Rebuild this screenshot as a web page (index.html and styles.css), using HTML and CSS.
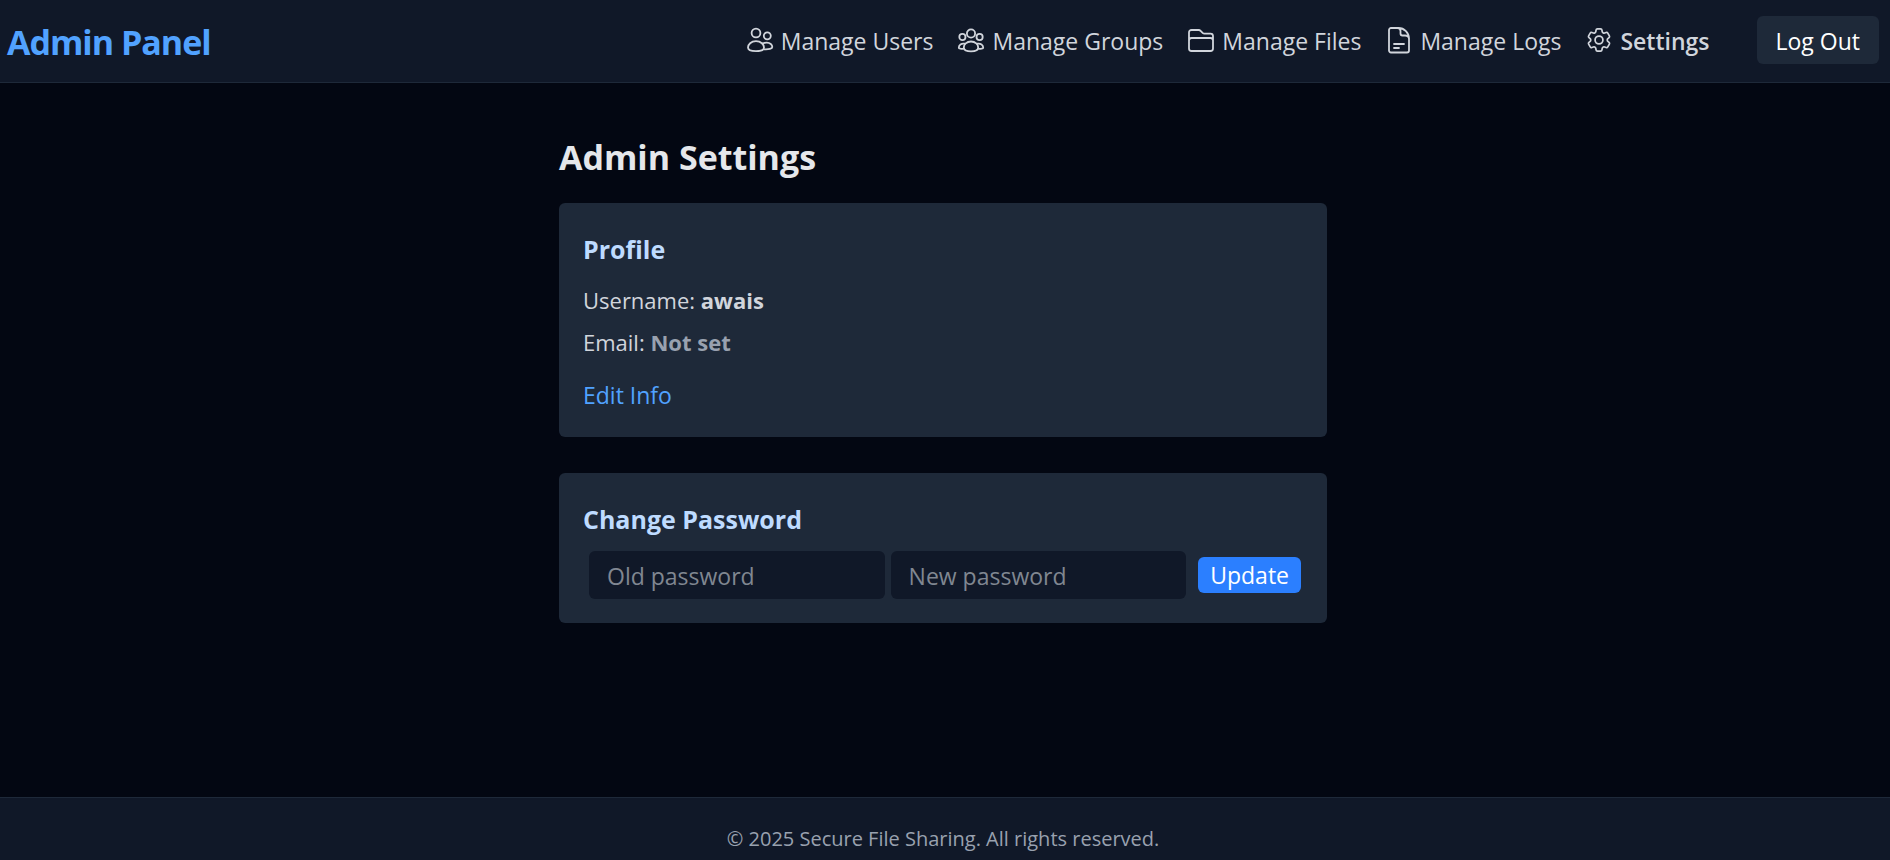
FILE: index.html
```html
<!DOCTYPE html>
<html lang="en">
<head>
<meta charset="utf-8">
<title>Admin Settings</title>
<link rel="stylesheet" href="styles.css">
</head>
<body>
<header class="topbar">
  <a class="brand" href="#">Admin Panel</a>
  <nav class="nav">
    <a class="nav-link" href="#"><svg class="icon" viewBox="-1 0 28 28"><circle cx="9" cy="7" r="4.4"/><circle cx="20.300" cy="9.800" r="3.500"/><path d="M9 15.200c5 0 8 3.200 8 6.400 0 2.400-2.800 3.600-8 3.600s-8-1.200-8-3.600c0-3.200 3-6.400 8-6.400z"/><path d="M15.600 17.600c1.200-.7 2.700-1 4.200-1 3.300 0 5.500 2.200 5.500 4.400 0 1.800-3.600 2.600-8.300 2.300"/></svg><span class="nav-label">Manage Users</span></a>
    <a class="nav-link" href="#"><svg class="icon" viewBox="-1 0 28 28"><circle cx="13" cy="7.500" r="4.100"/><circle cx="4.400" cy="11" r="3.100"/><circle cx="21.600" cy="11" r="3.100"/><path d="M13 15.500c4.400 0 7.200 3 7.200 6 0 2.500-2.700 3.900-7.200 3.900s-7.200-1.400-7.200-3.900c0-3 2.800-6 7.200-6z"/><path d="M6.500 17.600c-3.200-.4-5.700 1.200-5.700 4.200 0 1 2.200 1.200 5 .8M19.500 17.600c3.200-.4 5.700 1.200 5.700 4.200 0 1-2.200 1.200-5 .8"/></svg><span class="nav-label">Manage Groups</span></a>
    <a class="nav-link" href="#"><svg class="icon" viewBox="-1 -1 28 28"><path d="M1 5.500a2.500 2.500 0 0 1 2.500-2.500h7.200c.8 0 1.400.3 1.900.8l2 2c.5.500 1.100.8 1.900.8h6a2.500 2.500 0 0 1 2.500 2.500v12.400a2.500 2.500 0 0 1-2.500 2.500h-19a2.500 2.500 0 0 1-2.500-2.500zM1 13.500c0-1.500 1-2.500 2.500-2.500h19c1.500 0 2.500 1 2.500 2.500"/></svg><span class="nav-label">Manage Files</span></a>
    <a class="nav-link" href="#"><svg class="icon" viewBox="-1 -1 28 28"><path d="M5 1h7.500A10.500 10.500 0 0 1 23 11.500v12a2 2 0 0 1-2 2H5a2 2 0 0 1-2-2V3a2 2 0 0 1 2-2zM11.500 1c2.400 0 3 1.500 3 3v2.500a2 2 0 0 0 2 2H19c2.500 0 4 1 4 3.500M8 17h10M8 21h5"/></svg><span class="nav-label">Manage Logs</span></a>
    <a class="nav-link nav-link-current" href="#" aria-current="page"><svg class="icon icon-gear" viewBox="0.600 0.600 22.800 22.800"><path d="M9.594 3.940c.09-.542.560-.940 1.110-.940h2.593c.55 0 1.020.398 1.110.940l.213 1.281c.063.374.313.686.645.870.074.040.147.083.220.127.325.196.720.257 1.075.124l1.217-.456a1.125 1.125 0 0 1 1.370.490l1.296 2.247a1.125 1.125 0 0 1-.260 1.431l-1.003.827c-.293.241-.438.613-.430.992a7.723 7.723 0 0 1 0 .255c-.008.378.137.750.430.991l1.004.827c.424.350.534.955.260 1.430l-1.298 2.247a1.125 1.125 0 0 1-1.369.491l-1.217-.456c-.355-.133-.750-.072-1.076.124a6.470 6.470 0 0 1-.220.128c-.331.183-.581.495-.644.869l-.213 1.281c-.09.543-.560.940-1.110.940h-2.594c-.55 0-1.019-.398-1.110-.940l-.213-1.281c-.062-.374-.312-.686-.644-.870a6.520 6.520 0 0 1-.220-.127c-.325-.196-.720-.257-1.076-.124l-1.217.456a1.125 1.125 0 0 1-1.369-.490l-1.297-2.247a1.125 1.125 0 0 1 .260-1.431l1.004-.827c.292-.240.437-.613.430-.991a6.932 6.932 0 0 1 0-.255c.007-.380-.138-.751-.430-.992l-1.004-.827a1.125 1.125 0 0 1-.260-1.430l1.297-2.247a1.125 1.125 0 0 1 1.370-.491l1.216.456c.356.133.751.072 1.076-.124.072-.044.146-.086.220-.128.332-.183.582-.495.644-.869l.214-1.280Z"/><circle cx="12" cy="12" r="3.200"/></svg><span class="nav-label">Settings</span></a>
    <button class="logout" type="button">Log Out</button>
  </nav>
</header>
<main class="content">
  <h1 class="page-title">Admin Settings</h1>
  <section class="card">
    <h2 class="card-title">Profile</h2>
    <div class="details">
      <p class="detail">Username: <strong>awais</strong></p>
      <p class="detail">Email: <strong class="unset">Not set</strong></p>
    </div>
    <a class="edit-link" href="#">Edit Info</a>
  </section>
  <section class="card">
    <h2 class="card-title">Change Password</h2>
    <form class="password-form">
      <input class="field" type="password" placeholder="Old password" aria-label="Old password">
      <input class="field" type="password" placeholder="New password" aria-label="New password">
      <button class="update" type="button">Update</button>
    </form>
  </section>
</main>
<footer class="footer">© 2025 Secure File Sharing. All rights reserved.</footer>
</body>
</html>
```
FILE: styles.css
```css
* { box-sizing: border-box; }

body {
  display: flex;
  flex-direction: column;
  min-height: 100vh;
  margin: 0;
  background: #030712;
  color: #d1d5dc;
  font: 23px/36px "Segoe UI", "Open Sans", "Noto Sans", sans-serif;
}

h1, h2, p { margin: 0; }
a { color: inherit; text-decoration: none; }
button, input { border: 0; font: inherit; }
button { cursor: pointer; }

.topbar {
  display: flex;
  align-items: center;
  justify-content: space-between;
  padding: 16px 11px 18px 7px;
  background: #101828;
  border-bottom: 1px solid #1e2939;
}

.brand {
  padding-top: 4px;
  color: #51a2ff;
  font-size: 34px;
  font-weight: 700;
  line-height: 44px;
  letter-spacing: -1px;
}

.nav {
  display: flex;
  align-items: center;
  gap: 24px;
}

.nav-link {
  display: flex;
  align-items: center;
  gap: 7px;
}

.nav-label { padding-top: 2px; }
.nav-link-current { font-weight: 600; }

.icon {
  width: 28px;
  height: 28px;
  fill: none;
  stroke: currentColor;
  stroke-width: 1.8;
  stroke-linecap: round;
  stroke-linejoin: round;
}

.icon-gear { stroke-width: 1.4; }

.logout {
  margin-left: 23px;
  padding: 7px 19px 5px;
  border-radius: 6px;
  background: #1e2939;
  color: #fff;
}

.content {
  display: flex;
  flex: 1;
  flex-direction: column;
  align-items: center;
  gap: 36px;
  padding: 50px 4px 36px 0;
}

.page-title,
.card {
  width: 100%;
  max-width: 768px;
}

.page-title {
  margin-bottom: -14px;
  color: #e5e7eb;
  font-size: 34px;
  line-height: 48px;
}

.card {
  padding: 24px;
  border-radius: 6px;
  background: #1e2939;
}

.card-title {
  padding-top: 2px;
  color: #bedbff;
  font-size: 25px;
  font-weight: 700;
  line-height: 40px;
}

.details {
  display: grid;
  gap: 6px;
  margin: 13px 0 17px;
  font-size: 22px;
}

.unset { color: #99a1af; }
.edit-link { color: #51a2ff; }

.password-form {
  display: flex;
  align-items: center;
  gap: 6px;
  padding: 12px 2px 0 6px;
}

.field {
  flex: 1;
  min-width: 0;
  height: 48px;
  padding: 7px 18px 5px;
  border-radius: 6px;
  background: #101828;
  color: #fff;
}

.field::placeholder { color: #808791; }

.update {
  margin-left: 6px;
  padding: 1px 12px 0;
  border-radius: 6px;
  background: #2b7fff;
  color: #fff;
  line-height: 35px;
}

.footer {
  padding: 25px 4px 5px 0;
  background: #101828;
  border-top: 1px solid #1e2939;
  color: #99a1af;
  font-size: 20px;
  line-height: 32px;
  text-align: center;
}
```
